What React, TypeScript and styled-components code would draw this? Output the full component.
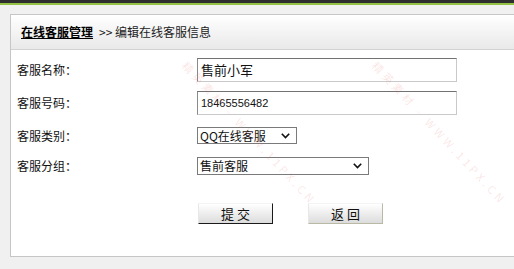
import React from "react";
import styled, { createGlobalStyle } from "styled-components";

const Global = createGlobalStyle`
  html, body { margin: 0; padding: 0; background: #f0f0f0; }
  body {
    font-family: "Noto Sans CJK SC", "Liberation Sans", sans-serif;
    font-size: 12px;
    color: #000;
    overflow: hidden;
  }
`;

const Root = styled.div`
  position: relative;
  width: 514px;
  height: 269px;
  overflow: hidden;
`;

const TopBar = styled.div`
  height: 3px;
  background: #2e2e2e;
  border-bottom: 2px solid #93c244;
`;

const Page = styled.div`
  padding: 9px 0 0 10px;
`;

const Card = styled.div`
  box-sizing: border-box;
  height: 243px;
  background: #fff;
  border: 1px solid #c6c6c6;
  border-right: none;
  display: flex;
  flex-direction: column;
`;

const Header = styled.div`
  height: 34px;
  border-bottom: 1px solid #d2d2d2;
  background: linear-gradient(#ffffff, #e9e9e9);
  display: flex;
  align-items: center;
  padding-left: 10px;
  font-size: 12px;
  line-height: 1;
`;

const HeaderLink = styled.a`
  font-weight: bold;
  color: #000;
  text-decoration: underline;
`;

const Crumb = styled.span`
  color: #222;
  margin-left: 6px;
`;

const Form = styled.div`
  padding-top: 3px;
  display: flex;
  flex-direction: column;
`;

const Row = styled.div<{ $h: number }>`
  height: ${(p) => p.$h}px;
  display: flex;
  align-items: center;
`;

const Label = styled.div`
  width: 180px;
  padding-left: 6px;
  font-size: 12px;
  color: #111;
`;

const TextInput = styled.div<{ $small?: boolean }>`
  box-sizing: border-box;
  width: 260px;
  height: 24px;
  border: 1px solid;
  border-color: #727272 #c9c9c9 #c9c9c9 #8a8a8a;
  background: #fff;
  display: flex;
  align-items: center;
  padding-left: 3px;
  font-family: ${(p) =>
    p.$small
      ? '"Liberation Sans", "Noto Sans CJK SC", sans-serif'
      : '"Noto Sans CJK SC", sans-serif'};
  font-size: ${(p) => (p.$small ? "11px" : "13px")};
  color: #111;
`;

const SelectBox = styled.div<{ $w: number; $h: number }>`
  box-sizing: border-box;
  width: ${(p) => p.$w}px;
  height: ${(p) => p.$h}px;
  border: 1px solid #7a7a7a;
  background: #fff;
  display: flex;
  align-items: center;
  justify-content: space-between;
  padding: 0 6px 0 2px;
  font-size: 12px;
  color: #111;
`;

const Chevron = () => (
  <svg width="9" height="6" viewBox="0 0 9 6">
    <path d="M0.8 0.8 L4.5 4.6 L8.2 0.8" fill="none" stroke="#111" strokeWidth="1.6" />
  </svg>
);

const ButtonRow = styled.div`
  margin-top: 24px;
  padding-left: 187px;
  display: flex;
  gap: 35px;
`;

const Button = styled.div<{ $default?: boolean }>`
  box-sizing: border-box;
  width: 75px;
  height: 21px;
  display: flex;
  align-items: center;
  justify-content: center;
  font-size: 13px;
  color: #111;
  background: linear-gradient(#ffffff, #dcdcdc);
  border: 1px solid;
  border-color: #f4f4f4 ${(p) => (p.$default ? "#1a1a1a" : "#b9b9a4")}
    ${(p) => (p.$default ? "#1a1a1a" : "#b9b9a4")} #e8e8e8;
`;

const Watermarks = styled.div`
  position: absolute;
  inset: 0;
  pointer-events: none;
`;

const Mark = styled.span<{ $x: number; $y: number }>`
  position: absolute;
  left: ${(p) => p.$x}px;
  top: ${(p) => p.$y}px;
  transform: rotate(47deg);
  transform-origin: 0 50%;
  white-space: nowrap;
  font-family: "Noto Sans CJK SC", "Liberation Sans", sans-serif;
  font-size: 11px;
  letter-spacing: 3.5px;
  color: rgba(230, 90, 90, 0.16);
`;

const markText = "精英素材 - WWW.11PX.CN";
const xs = [185, 375];

export default function App() {
  return (
    <Root>
      <Global />
      <TopBar />
      <Page>
        <Card>
          <Header>
            <HeaderLink>在线客服管理</HeaderLink>
            <Crumb>&gt;&gt; 编辑在线客服信息</Crumb>
          </Header>
          <Form>
            <Row $h={33}>
              <Label>客服名称：</Label>
              <TextInput>售前小军</TextInput>
            </Row>
            <Row $h={33}>
              <Label>客服号码：</Label>
              <TextInput $small>18465556482</TextInput>
            </Row>
            <Row $h={33}>
              <Label>客服类别：</Label>
              <SelectBox $w={100} $h={17}>
                <span>QQ在线客服</span>
                <Chevron />
              </SelectBox>
            </Row>
            <Row $h={27}>
              <Label>客服分组：</Label>
              <SelectBox $w={172} $h={18}>
                <span>售前客服</span>
                <Chevron />
              </SelectBox>
            </Row>
            <ButtonRow>
              <Button $default>提 交</Button>
              <Button>返 回</Button>
            </ButtonRow>
          </Form>
        </Card>
      </Page>
      <Watermarks>
        {xs.map((x) => (
          <Mark key={x} $x={x} $y={55}>
            {markText}
          </Mark>
        ))}
      </Watermarks>
    </Root>
  );
}
